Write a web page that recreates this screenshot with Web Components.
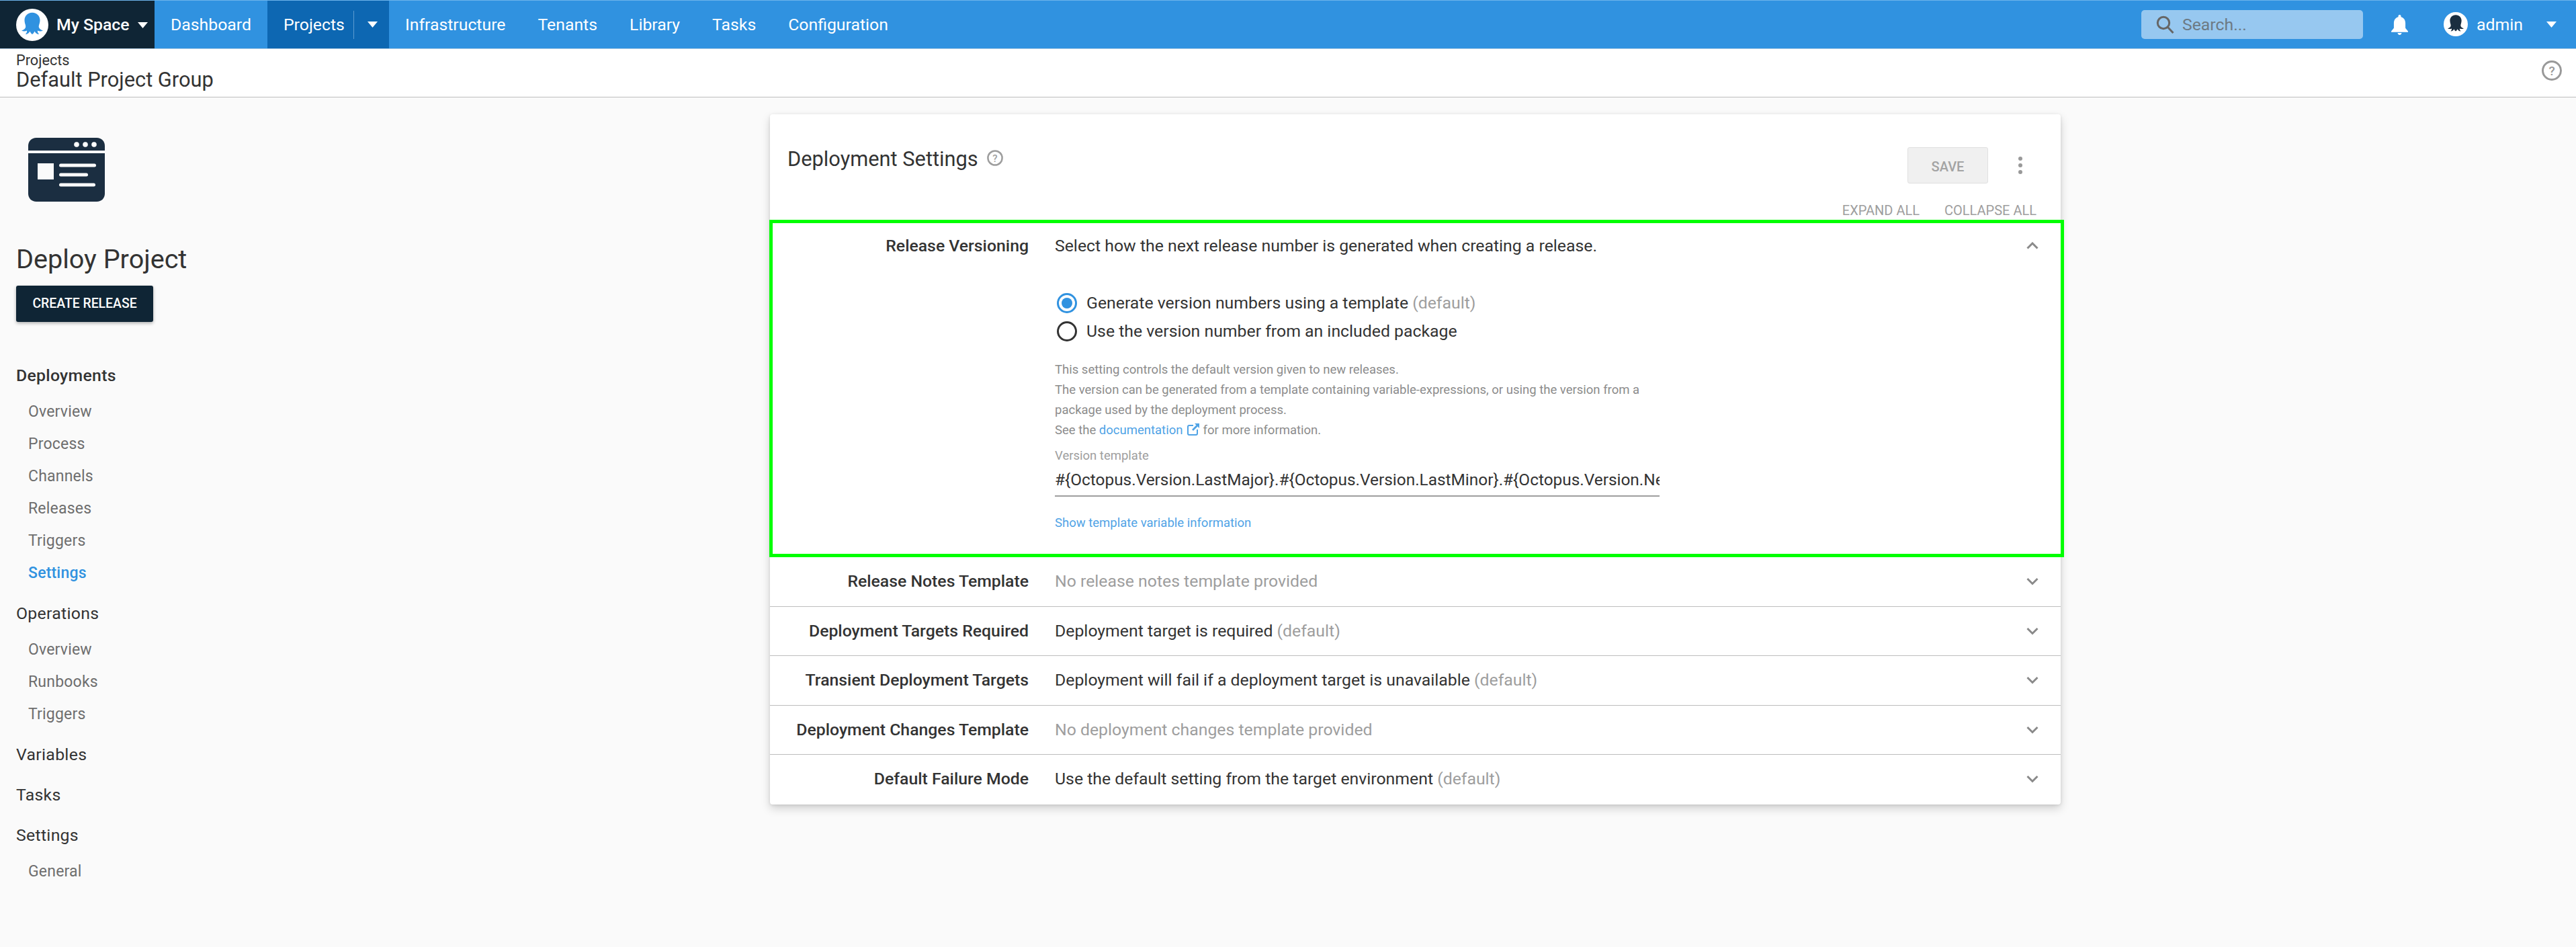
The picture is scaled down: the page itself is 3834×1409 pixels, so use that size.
<!DOCTYPE html>
<html>
<head>
<meta charset="utf-8">
<title>Deployment Settings</title>
<style>
  html, body { margin: 0; padding: 0; }
  body { background: #fafafa; color: #333; font-family: Roboto, "Liberation Sans", sans-serif; width: 3834px; min-height: 1409px; overflow: hidden; }
</style>
</head>
<body>
<top-bar></top-bar>
<page-title crumb="Projects" heading="Default Project Group"></page-title>
<page-main>
  <project-side slot="side"></project-side>
  <settings-card slot="card">
    <expander-row label="Release Versioning" open highlight>
      <span slot="summary">Select how the next release number is generated when creating a release.</span>
      <version-form></version-form>
    </expander-row>
    <expander-row label="Release Notes Template"><span slot="summary" style="color:#9e9e9e">No release notes template provided</span></expander-row>
    <expander-row label="Deployment Targets Required"><span slot="summary">Deployment target is required <span style="color:#9e9e9e">(default)</span></span></expander-row>
    <expander-row label="Transient Deployment Targets"><span slot="summary">Deployment will fail if a deployment target is unavailable <span style="color:#9e9e9e">(default)</span></span></expander-row>
    <expander-row label="Deployment Changes Template"><span slot="summary" style="color:#9e9e9e">No deployment changes template provided</span></expander-row>
    <expander-row label="Default Failure Mode"><span slot="summary">Use the default setting from the target environment <span style="color:#9e9e9e">(default)</span></span></expander-row>
  </settings-card>
</page-main>

<script>
const OCTO = 'M24 5.7C17 5.7 12.500 11 12.500 17C12.500 22 15 25 14 28C13 30.500 11 31.500 8 32.500C11 34 14 33.500 16 32.500C16.500 34.500 15.500 36 14 38C17.500 38 19.500 35.500 20.500 33.500C21.500 35.500 22.500 37 24 38C25.500 37 26.500 35.500 27.500 33.500C28.500 35.500 30.500 38 34 38C32.500 36 31.500 34.500 32 32.500C34 33.500 37 34 40 32.500C37 31.500 35 30.500 34 28C33 25 35.500 22 35.500 17C35.500 11 31 5.700 24 5.700Z'
const CARET = '<svg width="15" height="9" viewBox="0 0 15 9"><path d="M0 0h15L7.5 9z" fill="#fff"/></svg>'

class TopBar extends HTMLElement {
  constructor () {
    super()
    this.shadow = this.attachShadow({ mode: 'open' })
  }

  connectedCallback () {
    const links = ['Infrastructure', 'Tenants', 'Library', 'Tasks', 'Configuration']
    this.shadow.innerHTML = /* html */`
      <style>
        :host { display: flex; height: 73px; box-sizing: border-box; background: #3092e0; color: #fff; font: 400 24.8px/72px Roboto, sans-serif; border-top: 1px solid #6db3ea; border-bottom: 1px solid #b5cfe4; }
        .space { display: flex; align-items: center; width: 230px; box-sizing: border-box; padding-left: 24px; background: #0f2535; font-weight: 500; }
        .space svg.logo { margin-right: 12px; }
        .space svg.caret { margin-left: 12px; margin-top: 2px; }
        a { padding: 0 24px; color: inherit; display: block; }
        .active { display: flex; align-items: center; background: #0d67b2; width: 181px; box-sizing: border-box; padding-left: 24px; }
        .active span { width: 105px; height: 42px; line-height: 42px; border-right: 1px solid #5c9bd0; box-sizing: border-box; }
        .active svg { margin-left: 20px; }
        .grow { flex: 1; }
        .search { display: flex; align-items: center; width: 330px; height: 43px; margin: 14px 42px 0 0; background: #97c8f0; border-radius: 5px; box-sizing: border-box; padding-left: 22px; color: #6d7a84; line-height: 43px; }
        .search svg { margin-right: 12px; }
        .bell { margin: 21px 53px 0 0; }
        .avatar { margin: 17px 13px 0 0; }
        .user { display: flex; align-items: center; width: 119px; margin-right: 29px; box-sizing: border-box; }
        .user span { width: 104px; flex: none; }
      </style>
      <div class="space">
        <svg class="logo" width="48" height="48" viewBox="0 0 48 48"><circle cx="24" cy="24" r="24" fill="#fff"/><path d="${OCTO}" fill="#3092e0"/></svg>
        My Space
        <svg class="caret" width="15" height="9" viewBox="0 0 15 9"><path d="M0 0h15L7.5 9z" fill="#fff"/></svg>
      </div>
      <a>Dashboard</a>
      <div class="active"><span>Projects</span>${CARET}</div>
      ${links.map(l => `<a>${l}</a>`).join('')}
      <div class="grow"></div>
      <div class="search">
        <svg width="27" height="27" viewBox="0 0 27 27"><circle cx="11" cy="11" r="8.7" fill="none" stroke="#666" stroke-width="3"/><path d="M17 17l8.5 9" stroke="#666" stroke-width="3" fill="none"/></svg>
        Search...
      </div>
      <svg class="bell" width="25" height="30" viewBox="0 0 25 30"><path d="M12.5 0c1.2 0 2 .9 2 2v1.3c4.300 1 6.600 4.600 6.600 9v7.500L25 24.500v1.300H0v-1.300l3.900-4.700v-7.500c0-4.400 2.300-8 6.600-9V2c0-1.100.800-2 2-2z" fill="#fff"/><path d="M9.500 27h6c0 1.500-1.300 3-3 3s-3-1.500-3-3z" fill="#fff"/></svg>
      <svg class="avatar" width="36" height="36" viewBox="0 0 48 48"><circle cx="24" cy="24" r="24" fill="#fff"/><path d="${OCTO}" fill="#1a2e40"/></svg>
      <div class="user"><span>admin</span>${CARET}</div>
    `
  }
}

class PageTitle extends HTMLElement {
  constructor () {
    super()
    this.shadow = this.attachShadow({ mode: 'open' })
  }

  connectedCallback () {
    this.shadow.innerHTML = /* html */`
      <style>
        :host { display: flex; justify-content: space-between; height: 72px; box-sizing: border-box; background: #fff; border-bottom: 1px solid #bdbdbd; padding-left: 24px; color: #333; }
        .crumb { font: 400 21.7px/24px Roboto, sans-serif; margin-top: 5px; }
        h1 { margin: 0; font: 400 30.8px/34px Roboto, sans-serif; }
        svg { margin: 17px 21px 0 0; }
      </style>
      <div>
        <div class="crumb">${this.getAttribute('crumb')}</div>
        <h1>${this.getAttribute('heading')}</h1>
      </div>
      <svg width="30" height="30" viewBox="0 0 30 30"><circle cx="15" cy="15" r="13.500" fill="none" stroke="#999" stroke-width="3"/><text x="15" y="21.500" text-anchor="middle" font-family="Roboto" font-weight="500" font-size="19" fill="#999">?</text></svg>
    `
  }
}

class PageMain extends HTMLElement {
  constructor () {
    super()
    this.attachShadow({ mode: 'open' }).innerHTML = /* html */`
      <style>
        :host { display: grid; grid-template-columns: 1146px 1921px; align-items: start; }
      </style>
      <slot name="side"></slot>
      <slot name="card"></slot>
    `
  }
}

class ProjectSide extends HTMLElement {
  constructor () {
    super()
    this.shadow = this.attachShadow({ mode: 'open' })
  }

  connectedCallback () {
    this.shadow.innerHTML = /* html */`
      <style>
        :host { display: block; padding: 60px 0 0 24px; color: #333; font-family: Roboto, sans-serif; }
        svg { display: block; margin-left: 18px; }
        h2 { margin: 56px 0 0; font: 400 39.6px/60px Roboto, sans-serif; }
        button { display: block; margin: 9px 0 56px; width: 204px; height: 54px; padding: 0; border: 0; border-radius: 3px; background: #0f2535; color: #fff; font: 500 19.4px/54px Roboto, sans-serif; box-shadow: 0 2px 5px rgba(0,0,0,.3); }
        .head { margin-top: 12px; margin-bottom: 6px; font: 400 24.8px/48px Roboto, sans-serif; letter-spacing: .3px; }
        .head.on { font-weight: 500; }
        .item { padding-left: 18px; font: 400 23px/48px Roboto, sans-serif; color: #6e6e6e; letter-spacing: .2px; }
        .item.on { color: #3092e0; font-weight: 500; }
      </style>
      <svg width="114" height="95" viewBox="0 0 114 95">
        <path d="M0 19V12C0 5 5 0 12 0H102C109 0 114 5 114 12V19Z" fill="#1b2e41"/>
        <path d="M0 23H114V83C114 90 109 95 102 95H12C5 95 0 90 0 83Z" fill="#1b2e41"/>
        <circle cx="72" cy="10" r="3.800" fill="#fff"/><circle cx="85" cy="10" r="3.800" fill="#fff"/><circle cx="98" cy="10" r="3.800" fill="#fff"/>
        <rect x="14" y="38" width="24" height="24" fill="#fafafa"/>
        <rect x="46" y="38.500" width="55" height="5" rx="2.500" fill="#fafafa"/>
        <rect x="46" y="52.500" width="43" height="5" rx="2.500" fill="#fafafa"/>
        <rect x="46" y="67.500" width="54" height="5" rx="2.500" fill="#fafafa"/>
      </svg>
      <h2>Deploy Project</h2>
      <button>CREATE RELEASE</button>
      <div class="head on">Deployments</div>
      <div class="item">Overview</div>
      <div class="item">Process</div>
      <div class="item">Channels</div>
      <div class="item">Releases</div>
      <div class="item">Triggers</div>
      <div class="item on">Settings</div>
      <div class="head">Operations</div>
      <div class="item">Overview</div>
      <div class="item">Runbooks</div>
      <div class="item">Triggers</div>
      <div class="head">Variables</div>
      <div class="head">Tasks</div>
      <div class="head">Settings</div>
      <div class="item">General</div>
    `
  }
}

class SettingsCard extends HTMLElement {
  constructor () {
    super()
    this.attachShadow({ mode: 'open' }).innerHTML = /* html */`
      <style>
        :host { display: block; margin-top: 25px; background: #fff; border-radius: 4px; box-shadow: 0 6px 14px rgba(0,0,0,.17), 0 1px 4px rgba(0,0,0,.1); font-family: Roboto, sans-serif; color: #333; }
        header { display: flex; height: 128px; box-sizing: border-box; padding: 43px 36px 0 26px; }
        h2 { margin: 0; font: 400 30.8px/48px Roboto, sans-serif; }
        .q { margin: 10px 0 0 13px; }
        .grow { flex: 1; }
        .save { width: 120px; height: 54px; margin-top: 6px; box-sizing: border-box; border: 1px solid #e0e0e0; border-radius: 3px; background: #f0f0f0; color: #a3a3a3; font: 500 20px/56px Roboto, sans-serif; text-align: center; }
        .more { margin: 6px 0 0 24px; }
        .all { display: flex; justify-content: flex-end; gap: 37px; padding: 0 36px 2px 0; height: 32px; box-sizing: border-box; color: #9e9e9e; font: 400 20px/30px Roboto, sans-serif; }
      </style>
      <header>
        <h2>Deployment Settings</h2>
        <svg class="q" width="24" height="24" viewBox="0 0 24 24"><circle cx="12" cy="12" r="10.600" fill="none" stroke="#9e9e9e" stroke-width="2.500"/><text x="12" y="17.500" text-anchor="middle" font-family="Roboto" font-weight="500" font-size="15" fill="#9e9e9e">?</text></svg>
        <div class="grow"></div>
        <div class="save">SAVE</div>
        <svg class="more" width="48" height="54" viewBox="0 0 48 54"><circle cx="24" cy="17" r="3" fill="#999"/><circle cx="24" cy="27" r="3" fill="#999"/><circle cx="24" cy="37" r="3" fill="#999"/></svg>
      </header>
      <div class="all"><span>EXPAND ALL</span><span>COLLAPSE ALL</span></div>
      <slot></slot>
    `
  }
}

class ExpanderRow extends HTMLElement {
  constructor () {
    super()
    this.shadow = this.attachShadow({ mode: 'open' })
  }

  connectedCallback () {
    const open = this.hasAttribute('open')
    const chevron = open ? 'M1.500 9.500L9 2l7.500 7.500' : 'M1.500 2L9 9.500 16.500 2'
    this.shadow.innerHTML = /* html */`
      <style>
        :host { display: block; position: relative; font: 400 24.8px/36px Roboto, sans-serif; color: #333; }
        :host(:not([open])) { height: 73.5px; box-sizing: border-box; }
        :host(:not([open]):not(:last-child)) { border-bottom: 1px solid #bdbdbd; }
        .head { display: flex; align-items: center; height: 72px; }
        .label { width: 385px; text-align: right; font-weight: 500; flex: none; }
        .summary { margin-left: 39px; flex: 1; }
        svg { margin-right: 33px; flex: none; }
        .mark { position: absolute; left: -1px; right: -5px; top: -3px; bottom: 0; border: 5px solid #0f0; pointer-events: none; }
      </style>
      <div class="head">
        <div class="label">${this.getAttribute('label')}</div>
        <div class="summary"><slot name="summary"></slot></div>
        <svg width="18" height="12" viewBox="0 0 18 12"><path d="${chevron}" fill="none" stroke="#8a8a8a" stroke-width="3"/></svg>
      </div>
      <slot></slot>
      ${this.hasAttribute('highlight') ? '<div class="mark"></div>' : ''}
    `
  }
}

class VersionForm extends HTMLElement {
  constructor () {
    super()
    this.attachShadow({ mode: 'open' }).innerHTML = /* html */`
      <style>
        :host { display: block; padding: 28px 0 36px 424px; font-family: Roboto, sans-serif; color: #333; }
        .radio { display: flex; align-items: center; height: 42px; font-size: 24.8px; }
        .radio svg { margin: 0 14px 0 3px; }
        .radio span { color: #9e9e9e; }
        .help { margin-top: 21px; width: 900px; font: 400 18.5px/30px Roboto, sans-serif; color: #8c8c8c; }
        a { color: #4fa3e6; }
        .help svg { vertical-align: -2px; margin: 0 1px 0 2px; }
        .lbl { margin-top: 8px; font: 400 18.5px/30px Roboto, sans-serif; color: #9e9e9e; }
        .input { width: 900px; height: 46px; box-sizing: border-box; border-bottom: 2px solid #9e9e9e; font: 400 24.4px/42px Roboto, sans-serif; white-space: nowrap; overflow: hidden; }
        .show { margin-top: 24px; font: 400 18.5px/30px Roboto, sans-serif; color: #4fa3e6; }
      </style>
      <div class="radio"><svg width="30" height="30" viewBox="0 0 30 30"><circle cx="15" cy="15" r="13.500" fill="none" stroke="#3092e0" stroke-width="3"/><circle cx="15" cy="15" r="8" fill="#3092e0"/></svg>Generate version numbers using a template&nbsp;<span>(default)</span></div>
      <div class="radio"><svg width="30" height="30" viewBox="0 0 30 30"><circle cx="15" cy="15" r="13.500" fill="none" stroke="#333" stroke-width="3"/></svg>Use the version number from an included package</div>
      <div class="help">
        This setting controls the default version given to new releases.<br>
        The version can be generated from a template containing variable-expressions, or using the version from a package used by the deployment process.<br>
        See the <a>documentation</a> <svg width="18" height="18" viewBox="0 0 18 18"><path d="M9 3H3a2 2 0 0 0-2 2v10a2 2 0 0 0 2 2h10a2 2 0 0 0 2-2V9" fill="none" stroke="#4fa3e6" stroke-width="2"/><path d="M11 0h7v7l-2.500-2.500L9 11 7 9l6.500-6.500z" fill="#4fa3e6"/></svg> for more information.
      </div>
      <div class="lbl">Version template</div>
      <div class="input">#{Octopus.Version.LastMajor}.#{Octopus.Version.LastMinor}.#{Octopus.Version.NextPatch}</div>
      <div class="show">Show template variable information</div>
    `
  }
}

customElements.define('top-bar', TopBar)
customElements.define('page-title', PageTitle)
customElements.define('page-main', PageMain)
customElements.define('project-side', ProjectSide)
customElements.define('settings-card', SettingsCard)
customElements.define('expander-row', ExpanderRow)
customElements.define('version-form', VersionForm)
</script>
</body>
</html>
